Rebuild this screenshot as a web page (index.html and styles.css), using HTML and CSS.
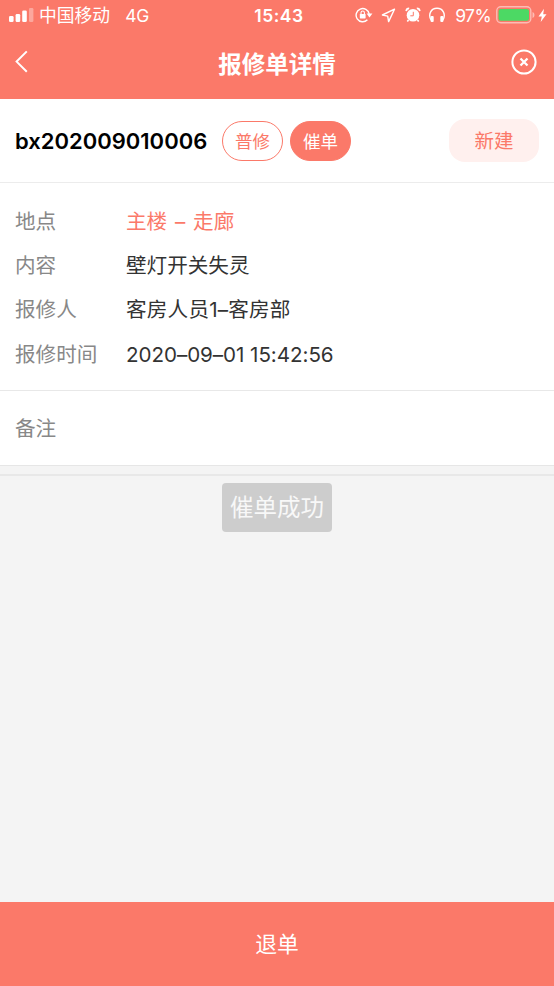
FILE: index.html
```html
<!DOCTYPE html>
<html lang="zh-CN">
<head>
<meta charset="utf-8">
<title>报修单详情</title>
<link rel="stylesheet" href="styles.css">
</head>
<body>
<div class="app">
  <header class="top">
    <div class="status">
      <div class="status-left">
        <svg class="signal" width="25" height="16" viewBox="0 0 25 16" fill="#fff"><rect x="0" y="9" width="4.6" height="6" rx="1.3"/><rect x="6.6" y="7" width="4.6" height="8" rx="1.3"/><rect x="13.2" y="3.5" width="4.6" height="11.5" rx="1.3"/><rect x="20" y="1" width="4.4" height="14" rx="1.3" opacity=".35"/></svg>
        <span class="carrier">中国移动</span>
        <span class="network">4G</span>
      </div>
      <div class="clock">15:43</div>
      <div class="status-right">
        <svg width="18" height="16" viewBox="0 0 18 16" fill="none" stroke="#fff" stroke-width="1.4"><path d="M12.4 12.8A6.6 6.6 0 1 1 14.2 7"/><path d="M11.6 6.6h5.8l-2.9 3.8z" fill="#fff" stroke="none"/><rect x="4.8" y="7" width="5.8" height="4.4" rx=".6" fill="#fff" stroke="none"/><path d="M6 7.4V5.7a1.7 1.7 0 0 1 3.4 0v1.7" stroke-width="1.1"/></svg>
        <svg class="location" width="15" height="15" viewBox="0 0 15 15" fill="none" stroke="#fff" stroke-width="1.4" stroke-linejoin="round"><path d="M13.5 1.2 1.4 7l5.3 1.1.9 5.5z"/></svg>
        <svg class="alarm" width="16" height="16" viewBox="0 0 16 16"><circle cx="8" cy="8.3" r="6.3" fill="#fff"/><path d="M1.2 4.1A3 3 0 0 1 4.2 1.4M11.8 1.4a3 3 0 0 1 3 2.7M3.5 13l-1.2 1.5M12.5 13l1.2 1.5" stroke="#fff" stroke-width="1.7" fill="none"/><path d="M8.3 4.8v4H5.3" stroke="#fb7969" stroke-width="1" fill="none"/></svg>
        <svg class="phones" width="18" height="16" viewBox="0 0 18 16"><path d="M3.2 13.2C-.3 7.4 3 1.3 9 1.3s9.3 6.1 5.8 11.9" fill="none" stroke="#fff" stroke-width="1.4"/><rect x="2.6" y="9" width="3.1" height="6" rx="1" fill="#fff"/><rect x="12.3" y="9" width="3.1" height="6" rx="1" fill="#fff"/></svg>
        <span class="percent">97%</span>
        <svg class="battery" width="39" height="18" viewBox="0 0 39 18"><rect x=".8" y=".8" width="34" height="16" rx="4" fill="none" stroke="#fff" stroke-opacity=".5" stroke-width="1.4"/><rect x="2.6" y="2.9" width="30.4" height="11.8" rx="2.2" fill="#4cd964"/><path d="M36.5 6q2 .6 2 3t-2 3z" fill="#fff" opacity=".5"/></svg>
        <svg class="bolt" width="9" height="15" viewBox="0 0 9 15"><path d="M6 .8.5 8.4h3.3L2.7 14 8.5 6.2H5.2z" fill="#fff"/></svg>
      </div>
    </div>
    <div class="nav">
      <svg width="14" height="24" viewBox="0 0 14 24" fill="none" stroke="#fff" stroke-width="2"><path d="M11.8 1.4 1.6 11.6l10.2 10.2"/></svg>
      <h1 class="title">报修单详情</h1>
      <svg class="close" width="26" height="26" viewBox="0 0 26 26" fill="none" stroke="#fff"><circle cx="13" cy="13" r="11.6" stroke-width="2"/><path d="m9.5 9.5 7 7m0-7-7 7" stroke-width="2.3"/></svg>
    </div>
  </header>
  <section class="order">
    <strong class="number">bx202009010006</strong>
    <span class="tag">普修</span>
    <span class="tag tag-solid">催单</span>
    <span class="state">新建</span>
  </section>
  <dl class="details">
    <div class="row"><dt>地点</dt><dd class="place">主楼 – 走廊</dd></div>
    <div class="row"><dt>内容</dt><dd>壁灯开关失灵</dd></div>
    <div class="row"><dt>报修人</dt><dd class="person">客房人员1–客房部</dd></div>
    <div class="row"><dt>报修时间</dt><dd class="time">2020–09–01 15:42:56</dd></div>
  </dl>
  <section class="remark">备注</section>
  <div class="gap"></div>
  <main class="content"><div class="toast">催单成功</div></main>
  <button class="return">退单</button>
</div>
</body>
</html>
```

FILE: styles.css
```css
* { box-sizing: border-box; }
body {
  margin: 0;
  font-family: Inter, "Noto Sans CJK SC", sans-serif;
  color: #333;
  background: #f4f4f4;
  white-space: nowrap;
}
svg { display: block; flex: none; }
.app { height: 986px; display: flex; flex-direction: column; }
.top { height: 99px; flex: none; background: #fb7969; color: #fff; }
.status {
  height: 30px;
  display: grid;
  grid-template-columns: 1fr auto 1fr;
  align-items: center;
  padding: 0 7px 0 9px;
  font-size: 17.5px;
  line-height: 30px;
}
.status-left, .status-right { display: flex; align-items: center; }
.status-right { justify-content: flex-end; }
.carrier { margin-left: 5px; padding-top: 2px; font-size: 17.8px; line-height: 28px; }
.network { margin-left: 15px; padding-top: 1px; line-height: 29px; letter-spacing: -0.3px; }
.clock { padding: 1px 0 0 2px; line-height: 29px; font-weight: 600; font-size: 17.5px; letter-spacing: 0.5px; }
.location { margin-left: 8px; }
.alarm { margin-left: 9px; }
.phones { margin-left: 7px; }
.percent { margin-left: 9px; padding-top: 1px; line-height: 29px; letter-spacing: -0.6px; }
.battery { margin-left: 5px; }
.bolt { margin-left: 3px; }
.nav {
  height: 64px;
  padding: 0 17px 0 15px;
  display: flex;
  justify-content: space-between;
  align-items: center;
}
.title { margin: 5px 0 0 14px; font-size: 23.5px; line-height: 34px; font-weight: 600; }
.order {
  height: 84px;
  flex: none;
  padding: 0 15px;
  display: flex;
  align-items: center;
  background: #fff;
  border-bottom: 1px solid #ececec;
}
.number { width: 207px; color: #000; font-size: 22px; font-weight: 600; letter-spacing: 0; }
.tag {
  width: 61px;
  height: 40px;
  margin-right: 7px;
  border: 1px solid #fb7969;
  border-radius: 20px;
  color: #fb7969;
  font-size: 17.5px;
  line-height: 40px;
  text-align: center;
}
.tag-solid { background: #fb7969; color: #fff; }
.state {
  width: 90px;
  height: 43px;
  margin-left: auto;
  border-radius: 16px;
  background: #fff0ee;
  color: #fb7969;
  font-size: 19.5px;
  line-height: 45px;
  text-align: center;
}
.details {
  height: 208px;
  flex: none;
  margin: 0;
  padding: 16.5px 15px 0;
  background: #fff;
  border-bottom: 1px solid #e8e8e8;
  font-size: 20.6px;
}
.row { display: flex; height: 44.4px; line-height: 44.4px; }
dt { width: 111px; color: #888; }
dd { margin: 0; }
.place { color: #fb7969; word-spacing: 2px; }
.person { letter-spacing: 0.2px; }
.time { letter-spacing: -0.05px; }
.remark {
  height: 75px;
  flex: none;
  padding: 0 15px;
  background: #fff;
  border-bottom: 1px solid #e6e6e6;
  color: #888;
  font-size: 20.6px;
  line-height: 76px;
}
.gap { height: 10px; flex: none; border-bottom: 2px solid #e8e8e8; }
.content { flex: 1; display: flex; justify-content: center; align-items: flex-start; padding-top: 7px; }
.toast {
  width: 110px;
  height: 49px;
  border-radius: 4px;
  background: #cdcdcd;
  color: #f8f8f8;
  font-size: 23.5px;
  line-height: 50px;
  text-align: center;
}
.return {
  height: 84px;
  flex: none;
  border: 0;
  padding: 0;
  background: #fb7969;
  color: #fff;
  font: 21.8px/84px Inter, "Noto Sans CJK SC", sans-serif;
}
```
